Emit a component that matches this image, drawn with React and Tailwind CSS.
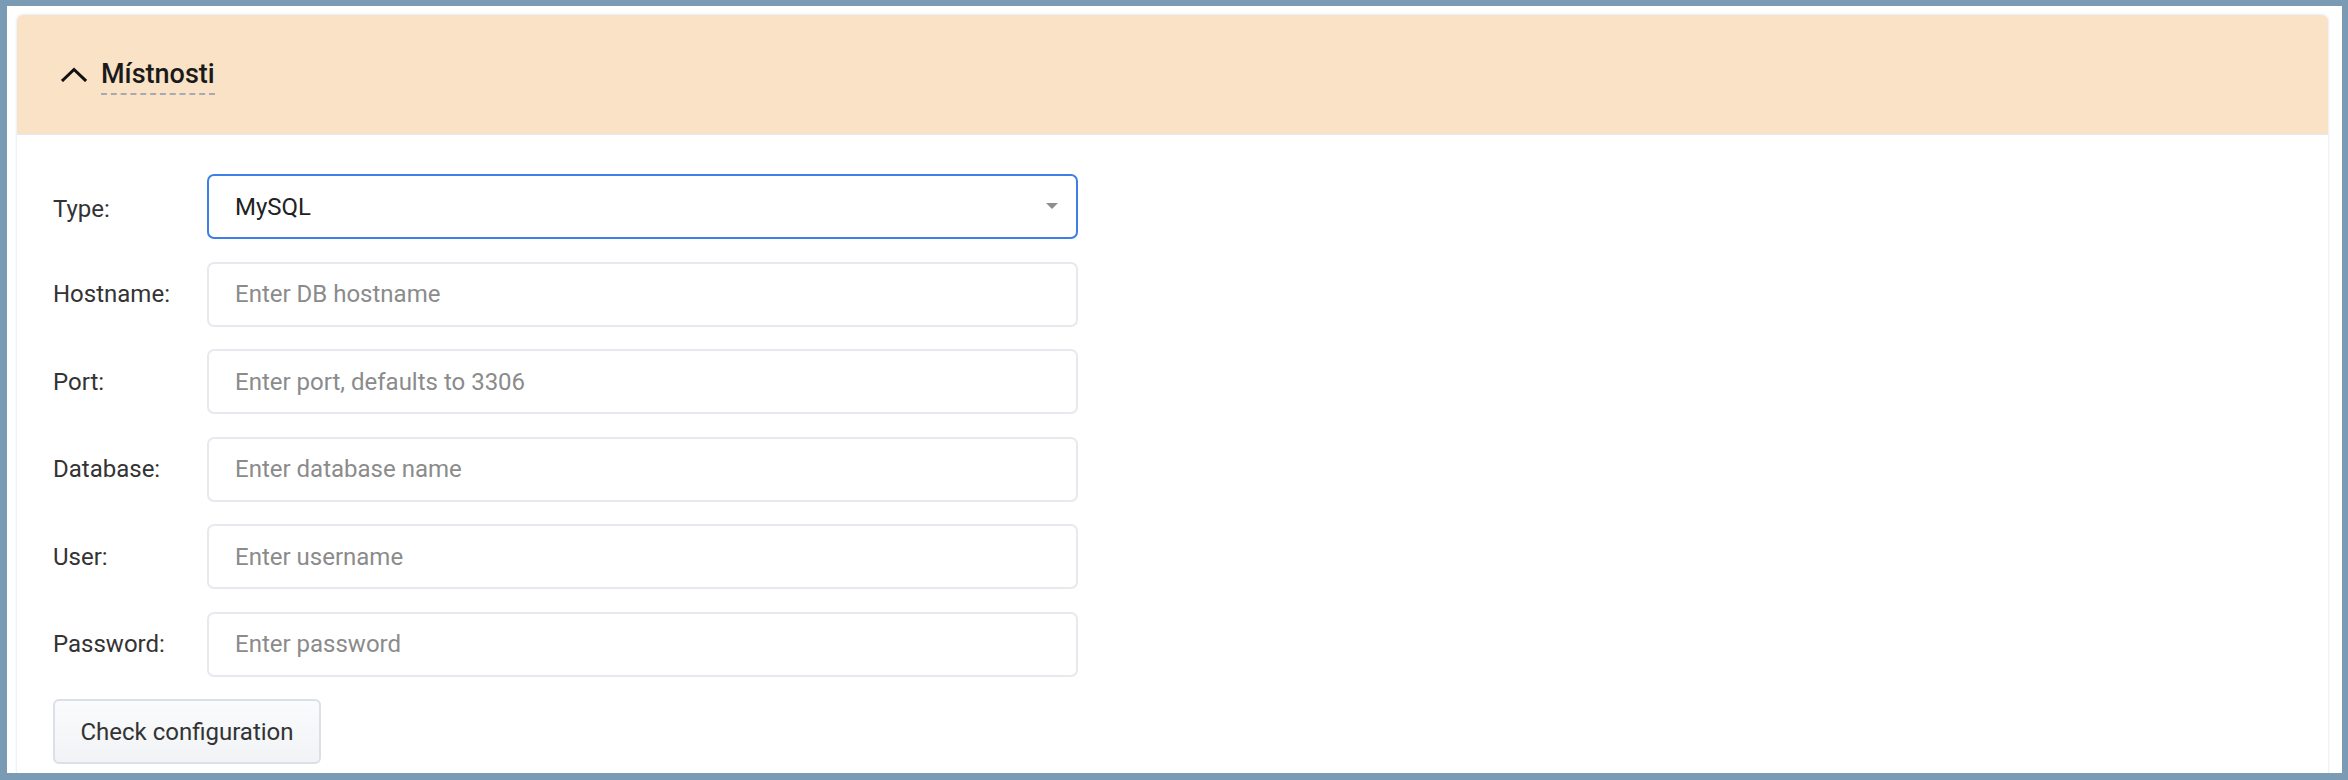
import { useState } from "react";

const fields = [
  { label: "Hostname:", placeholder: "Enter DB hostname" },
  { label: "Port:", placeholder: "Enter port, defaults to 3306" },
  { label: "Database:", placeholder: "Enter database name" },
  { label: "User:", placeholder: "Enter username" },
  { label: "Password:", placeholder: "Enter password", type: "password" },
];

export default function App() {
  const [type, setType] = useState("MySQL");

  return (
    <div className="h-[780px] w-full overflow-hidden bg-[#7b9bb5] pt-[6px] pr-[6px] pb-[7px] pl-[7px] font-['Roboto',sans-serif]">
      <div className="h-full overflow-hidden bg-white pt-[9px] pr-[14px] pl-[10px]">
        <div className="h-[900px] rounded-t-[6px] bg-white shadow-[0_0_3px_rgba(140,150,190,0.35)]">
          {/* header */}
          <div className="flex h-[120px] items-center gap-[14px] rounded-t-[6px] border-b border-[#e9e7ee] bg-[#f9e2c5] pt-[4px] pl-[44px]">
            <svg width="26" height="15" viewBox="0 0 26 15" fill="none" className="mt-[-4px]">
              <path d="M2 13 L13 2.5 L24 13" stroke="#111" strokeWidth="3" strokeLinecap="square" />
            </svg>
            <span className="border-b-2 border-dashed border-[#a9a9b0] pb-[3px] text-[27px] leading-[31px] font-medium text-[#1a1a1a]">
              Místnosti
            </span>
          </div>

          {/* body */}
          <div className="flex flex-col gap-[22.5px] pt-[39px] pl-[36px]">
            <div className="flex items-center">
              <label className="w-[154px] pt-[4px] text-[24px] text-[#333]">Type:</label>
              <div className="relative h-[65px] w-[871px]">
                <select
                  value={type}
                  onChange={(e) => setType(e.target.value)}
                  className="h-full w-full appearance-none rounded-[7px] border-2 border-[#3d7fe6] bg-white pl-[26px] text-[24px] text-[#222] outline-none"
                >
                  <option>MySQL</option>
                  <option>PostgreSQL</option>
                  <option>SQLite</option>
                </select>
                <svg width="12" height="7" viewBox="0 0 12 7" className="pointer-events-none absolute top-[29px] right-[20px]">
                  <path d="M0 0 H12 L6 6 Z" fill="#8e8e8e" />
                </svg>
              </div>
            </div>

            {fields.map((f) => (
              <div key={f.label} className="flex items-center">
                <label className="w-[154px] text-[24px] text-[#333]">{f.label}</label>
                <input
                  type={f.type || "text"}
                  placeholder={f.placeholder}
                  className="h-[65px] w-[871px] rounded-[7px] border-2 border-[#e8e9ee] bg-white pl-[26px] text-[24px] text-[#222] outline-none placeholder:text-[#8b8b8b]"
                />
              </div>
            ))}

            <div>
              <button className="h-[65px] w-[268px] rounded-[6px] border-2 border-[#dcdfe7] bg-gradient-to-b from-[#fafbfc] to-[#f1f3f6] text-[24px] text-[#333]">
                Check configuration
              </button>
            </div>
          </div>
        </div>
      </div>
    </div>
  );
}
